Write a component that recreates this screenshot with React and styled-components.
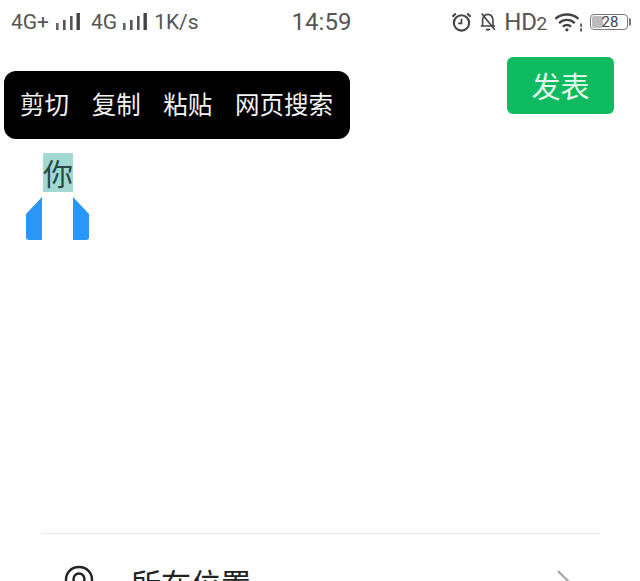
import React from 'react';
import styled, {createGlobalStyle} from 'styled-components';

const GlobalStyle = createGlobalStyle`
  html, body {
    margin: 0;
    padding: 0;
    background: #fff;
  }
  body {
    font-family: "Noto Sans CJK SC", "Liberation Sans", sans-serif;
  }
`;

const menuItems = ['剪切', '复制', '粘贴', '网页搜索'];

function SignalBars() {
  return (
    <svg width="24" height="18" viewBox="0 0 24 18">
      <rect x="0" y="10" width="2.6" height="7" fill="#666" />
      <rect x="7" y="7" width="2.6" height="10" fill="#555" />
      <rect x="14" y="3" width="2.6" height="14" fill="#555" />
      <rect x="20.5" y="0" width="3.4" height="17" fill="#444" />
    </svg>
  );
}

function AlarmIcon() {
  return (
    <svg width="21" height="22" viewBox="0 0 22 22" fill="none" stroke="#444" strokeWidth="2.2">
      <circle cx="11" cy="12" r="8" />
      <path d="M11 7.5V12.5H7.5" strokeWidth="1.8" />
      <path d="M1.5 5.5L5 2M20.5 5.5L17 2" />
    </svg>
  );
}

function BellOffIcon() {
  return (
    <svg width="18" height="22" viewBox="0 0 20 22" fill="none" stroke="#444" strokeWidth="1.8">
      <path d="M4 15.5V9C4 5 6.5 2.5 10 2.5S15 5 15.5 8.5V15.5H18H2" />
      <path d="M8 18.5C8.5 20 11.5 20 12 18.5" strokeWidth="2" />
      <path d="M3 1.5L17.5 19.5" />
    </svg>
  );
}

function WifiIcon() {
  return (
    <svg width="29" height="21" viewBox="0 0 27 20" fill="none" stroke="#444" strokeWidth="2.2">
      <path d="M1 6.5C7 1 17 1 23 6.5" />
      <path d="M4.5 10.5C9 6.5 15 6.5 19.5 10.5" />
      <path d="M8 14C10.5 12 13.5 12 16 14" />
      <circle cx="12" cy="17" r="1.6" fill="#444" stroke="none" />
      <path d="M25.5 11V14M25.5 15.5V18.5" strokeWidth="1.6" />
    </svg>
  );
}

function PinIcon() {
  return (
    <svg width="30" height="36" viewBox="0 0 30 36" fill="none" stroke="#222" strokeWidth="2.4">
      <path d="M15 2C7 2 2 8 2 14.5C2 22 10 30 15 34C20 30 28 22 28 14.5C28 8 23 2 15 2Z" />
      <circle cx="15" cy="14" r="5.5" />
    </svg>
  );
}

function Chevron() {
  return (
    <ChevronBox>
      <svg width="18" height="32" viewBox="0 0 18 32" fill="none" stroke="#aaa" strokeWidth="2.4">
        <path d="M2 2L16 16L2 30" />
      </svg>
    </ChevronBox>
  );
}

function Handle({side}) {
  const d = side === 'left'
    ? 'M16 0V43H3Q0 43 0 40V17Z'
    : 'M0 0V43H13Q16 43 16 40V17Z';
  return (
    <svg width="16" height="43" viewBox="0 0 16 43">
      <path d={d} fill="#2a96f8" />
    </svg>
  );
}

export default function App() {
  return (
    <Page>
      <GlobalStyle />
      <StatusBar>
        <StatusGroup>
          <StatusText>4G+</StatusText>
          <Bars><SignalBars /></Bars>
          <Carrier>4G</Carrier>
          <SignalBars />
          <StatusText>1K/s</StatusText>
        </StatusGroup>
        <Clock>14:59</Clock>
        <StatusRight>
          <AlarmIcon />
          <BellOffIcon />
          <HdLabel>HD<small>2</small></HdLabel>
          <WifiIcon />
          <Battery>
            <BatteryLevel />
            <BatteryText>28</BatteryText>
          </Battery>
        </StatusRight>
      </StatusBar>

      <TopBar>
        <PublishButton>发表</PublishButton>
      </TopBar>

      <Editor>
        <Popup>
          {menuItems.map((item) => (
            <PopupItem key={item}>{item}</PopupItem>
          ))}
        </Popup>
        <Selected>
          你
          <HandleLeft><Handle side="left" /></HandleLeft>
          <HandleRight><Handle side="right" /></HandleRight>
        </Selected>
      </Editor>

      <LocationRow>
        <PinIcon />
        <LocationText>所在位置</LocationText>
        <Chevron />
      </LocationRow>
    </Page>
  );
}

const Page = styled.div`
  width: 640px;
  height: 581px;
  overflow: hidden;
  display: flex;
  flex-direction: column;
  background: #fff;
`;

const StatusBar = styled.div`
  height: 44px;
  flex: none;
  box-sizing: border-box;
  margin-bottom: 1px;
  display: grid;
  grid-template-columns: 1fr auto 1fr;
  align-items: center;
  padding: 0 6px 0 11px;
  color: #555;
  font-family: Roboto, "Liberation Sans", sans-serif;
`;

const StatusGroup = styled.div`
  display: flex;
  align-items: center;
  gap: 7px;
`;

const Bars = styled.span`
  display: flex;
`;

const StatusText = styled.span`
  font-size: 21px;
  white-space: nowrap;
`;

const Carrier = styled(StatusText)`
  margin-left: 4px;
  margin-right: -1px;
`;

const Clock = styled.span`
  font-size: 24px;
  margin-left: -2px;
  color: #555;
`;

const StatusRight = styled.div`
  display: flex;
  justify-content: flex-end;
  align-items: center;
  gap: 7px;
`;

const HdLabel = styled.span`
  font-size: 24px;
  color: #555;
  letter-spacing: -0.3px;

  small {
    font-size: 19px;
  }
`;

const Battery = styled.div`
  position: relative;
  width: 38px;
  height: 16px;
  margin-right: 6px;
  border: 1px solid #777;
  border-radius: 4px;
  box-sizing: border-box;

  &::after {
    content: '';
    position: absolute;
    right: -4px;
    top: 3px;
    width: 2px;
    height: 8px;
    background: #777;
    border-radius: 0 2px 2px 0;
  }
`;

const BatteryLevel = styled.div`
  position: absolute;
  left: 1px;
  top: 1px;
  bottom: 1px;
  width: 11px;
  background: #bbb;
  border-radius: 2px;
`;

const BatteryText = styled.span`
  position: absolute;
  left: 2px;
  right: 0;
  top: -1px;
  text-align: center;
  font-size: 15px;
  line-height: 17px;
  color: #444;
`;

const TopBar = styled.div`
  flex: none;
  display: flex;
  justify-content: flex-end;
  padding: 12px 26px 0 0;
`;

const PublishButton = styled.button`
  width: 107px;
  height: 57px;
  border: 0;
  border-radius: 6px;
  background: #0fbb60;
  color: #e6f8ee;
  font-family: inherit;
  font-size: 29px;
  padding: 0 0 2px;
`;

const Editor = styled.div`
  flex: 1;
  position: relative;
  padding: 39px 0 0 43px;
`;

const Popup = styled.div`
  position: absolute;
  left: 4px;
  top: -43px;
  width: 346px;
  height: 68px;
  box-sizing: border-box;
  padding: 0 17px 3px 16px;
  display: flex;
  align-items: center;
  justify-content: space-between;
  background: #000;
  border-radius: 12px;
`;

const PopupItem = styled.span`
  color: #f2f2f2;
  font-size: 24.5px;
  white-space: nowrap;
`;

const Selected = styled.div`
  position: relative;
  width: 30px;
  height: 39px;
  background: #a3d8d3;
  color: #26494a;
  font-size: 30px;
  line-height: 38px;
  text-align: center;
`;

const HandleLeft = styled.div`
  position: absolute;
  left: -17px;
  top: 44px;
  line-height: 0;
`;

const HandleRight = styled.div`
  position: absolute;
  left: 30px;
  top: 44px;
  line-height: 0;
`;

const LocationRow = styled.div`
  flex: none;
  height: 48px;
  box-sizing: border-box;
  margin: 0 40px 0 42px;
  border-top: 1px solid #e6e6e6;
  display: flex;
  align-items: flex-start;
  padding: 31px 26px 0 22px;
  overflow: hidden;
`;

const LocationText = styled.span`
  flex: 1;
  margin: -3px 0 0 37px;
  font-size: 30px;
  line-height: 40px;
  color: #222;
`;

const ChevronBox = styled.span`
  display: block;
  margin-top: 4px;
  line-height: 0;
`;
